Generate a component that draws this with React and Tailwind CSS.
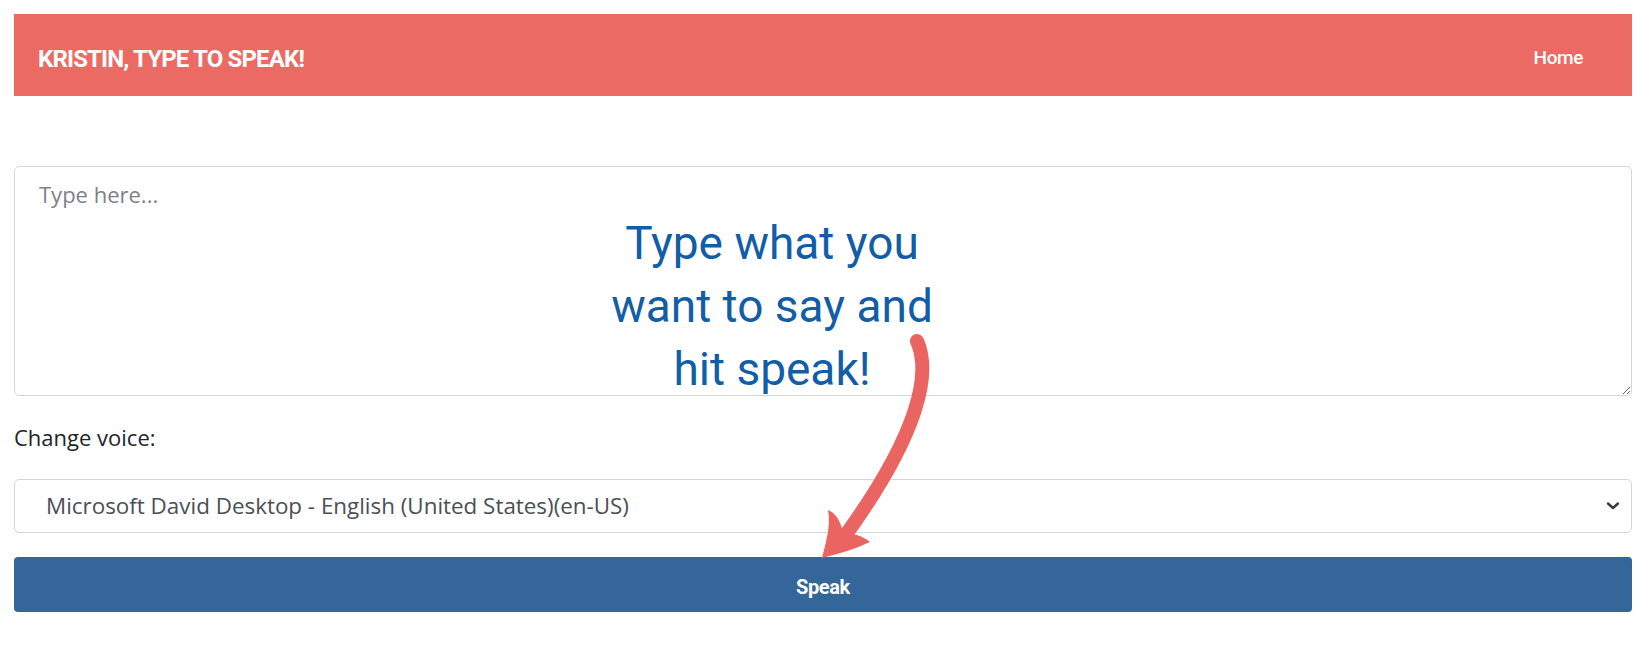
import React, { useState } from 'react';

const voices = ['Microsoft David Desktop - English (United States)(en-US)'];

export default function App() {
  const [text, setText] = useState('');
  const [voice, setVoice] = useState(voices[0]);

  return (
    <div className="relative min-h-[650px] w-[1650px] bg-white pl-[14px] pr-[18px] pt-[14px] font-['Open_Sans',sans-serif] text-[#212529]">
      {/* header */}
      <nav className="flex h-[82px] items-center justify-between bg-[#ec6a64] pl-[24px] pr-[49px] pt-[7px]">
        <span className="font-['Roboto',sans-serif] text-[24px] font-bold tracking-[-0.035em] text-white">
          KRISTIN, TYPE TO SPEAK!
        </span>
        <a href="#" className="font-['Roboto',sans-serif] text-[19px] font-medium tracking-[-0.02em] text-white">
          Home
        </a>
      </nav>

      {/* form */}
      <div className="mt-[70px] flex flex-col">
        <textarea
          value={text}
          onChange={(e) => setText(e.target.value)}
          placeholder="Type here..."
          className="h-[230px] w-full rounded-[5px] border border-[#d3d6dc] px-[24px] py-[12px] text-[22px] leading-[30px] placeholder-[#7d8287] outline-none"
        />
        <label className="mt-[26px] text-[22px] leading-[30px]">Change voice:</label>
        <div className="relative mt-[27px]">
          <select
            value={voice}
            onChange={(e) => setVoice(e.target.value)}
            className="h-[54px] w-full appearance-none rounded-[5px] border border-[#d3d6dc] bg-white pl-[31px] text-[22.4px] text-[#4a4f55] outline-none"
          >
            {voices.map((v) => (
              <option key={v}>{v}</option>
            ))}
          </select>
          <svg className="pointer-events-none absolute right-[12px] top-1/2 -translate-y-1/2" width="14" height="10" viewBox="0 0 14 10">
            <path d="M2 2.5 L7 7 L12 2.5" fill="none" stroke="#343a40" strokeWidth="2.4" strokeLinecap="round" strokeLinejoin="round" />
          </svg>
        </div>
        <button className="mt-[24px] h-[55px] w-full rounded-[4px] bg-[#346699] pt-[5px] font-['Roboto',sans-serif] text-[20px] font-bold tracking-[-0.02em] text-white">
          Speak
        </button>
      </div>

      {/* annotation */}
      <div className="pointer-events-none absolute left-[562px] top-[212px] w-[420px] text-center font-['Roboto',sans-serif] text-[46px] leading-[63px] text-[#125ea6]">
        Type what you
        <br />
        want to say and
        <br />
        hit speak!
      </div>
      <svg className="pointer-events-none absolute left-0 top-0" width="1650" height="650" viewBox="0 0 1650 650">
        <path d="M917 341 C931 372 921 432 842 540" fill="none" stroke="#ea6562" strokeWidth="14" strokeLinecap="round" />
        <path d="M822 558 C826 542 831 526 828 510 C836 513 841 522 843 533 C852 533 861 535 870 542 C855 549 838 554 822 558 Z" fill="#ea6562" />
      </svg>
    </div>
  );
}
